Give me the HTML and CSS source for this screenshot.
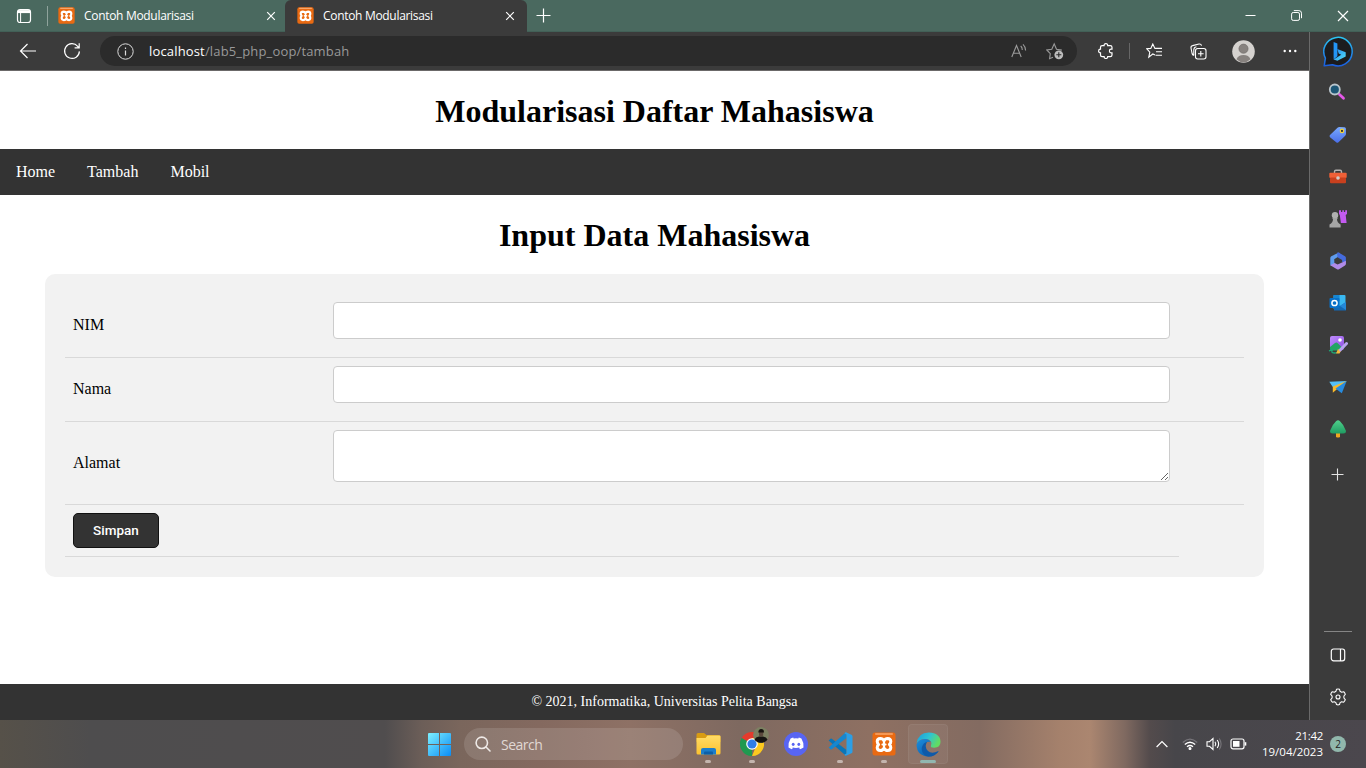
FILE: index.html
```html
<!DOCTYPE html>
<html lang="id">
<head>
<meta charset="utf-8">
<title>Contoh Modularisasi</title>
<link rel="stylesheet" href="styles.css">
</head>
<body>
<svg class="defs" width="0" height="0" aria-hidden="true">
  <defs>
    <linearGradient id="win" x1="0" y1="0" x2="1" y2="1"><stop offset="0" stop-color="#7df0ff"/><stop offset="1" stop-color="#0a8cf5"/></linearGradient>
    <linearGradient id="bing" x1="0" y1="0" x2="0" y2="1"><stop offset="0" stop-color="#2bc3f2"/><stop offset="1" stop-color="#1a5fe0"/></linearGradient>
    <linearGradient id="bingb" x1="0" y1="0" x2="1" y2="1"><stop offset="0" stop-color="#2186f0"/><stop offset="1" stop-color="#54e0f5"/></linearGradient>
    <linearGradient id="tag" x1="0" y1="0" x2="0" y2="1"><stop offset="0" stop-color="#79a9ff"/><stop offset="1" stop-color="#4a6fe8"/></linearGradient>
    <linearGradient id="folder" x1="0" y1="0" x2="0" y2="1"><stop offset="0" stop-color="#ffdc68"/><stop offset="1" stop-color="#fcc22f"/></linearGradient>
    <linearGradient id="edge1" x1="0" y1="0" x2="1" y2=".4"><stop offset="0" stop-color="#1c9bdc"/><stop offset=".55" stop-color="#2fc3d2"/><stop offset="1" stop-color="#62dc63"/></linearGradient>
    <linearGradient id="edge2" x1="0" y1="0" x2="1" y2="1"><stop offset="0" stop-color="#1a8fe0"/><stop offset="1" stop-color="#0c4f9c"/></linearGradient>
    <linearGradient id="pal" x1="0" y1="0" x2="1" y2="1"><stop offset="0" stop-color="#c08cff"/><stop offset="1" stop-color="#8c4fe0"/></linearGradient>
    <linearGradient id="tree" x1="0" y1="0" x2="0" y2="1"><stop offset="0" stop-color="#4fd08b"/><stop offset="1" stop-color="#1f9c62"/></linearGradient>
    <symbol id="xampp" viewBox="0 0 24 24">
      <rect x=".5" y=".5" width="23" height="23" rx="2.5" fill="#e96a12"/>
      <rect x="3" y="1.2" width="18" height="1.6" rx=".8" fill="#f7a76b"/>
      <path d="M12 8.800Q10.800 6.500 8.400 6.500 5.200 6.600 5.200 9.400 5.300 11.300 6.600 12.500 5.200 13.700 5.200 15.600 5.300 18.400 8.400 18.500 10.800 18.500 12 16.200 13.200 18.500 15.600 18.500 18.700 18.400 18.800 15.600 18.800 13.700 17.400 12.500 18.800 11.300 18.800 9.400 18.700 6.600 15.600 6.500 13.200 6.500 12 8.800z" fill="none" stroke="#fff" stroke-width="3" stroke-linejoin="round"/>
      <path d="M10.500 12.500h3M12 9v7" stroke="#fff" stroke-width="2.200" stroke-linecap="round"/>
    </symbol>
    <symbol id="close" viewBox="0 0 10 10"><path d="M1.2 1.2l7.600 7.600M8.800 1.200L1.200 8.800" fill="none" stroke="#fff" stroke-width="1.200"/></symbol>
  </defs>
</svg>

<div class="tabstrip">
  <svg class="tabs-menu" width="16" height="16" viewBox="0 0 16 16" fill="none" stroke="#fff" stroke-width="1.200"><rect x="1.500" y="1.500" width="13" height="13" rx="2.500"/><path d="M2 3.600h12" stroke-width="3"/><path d="M4.600 5v9" stroke-width="1"/></svg>
  <span class="tab-sep"></span>
  <div class="tab tab-first">
    <svg class="favicon" width="17" height="17"><use href="#xampp"/></svg>
    <span class="tab-title">Contoh Modularisasi</span>
    <svg class="tab-close" width="10" height="10"><use href="#close"/></svg>
  </div>
  <div class="tab tab-active">
    <svg class="favicon" width="17" height="17"><use href="#xampp"/></svg>
    <span class="tab-title">Contoh Modularisasi</span>
    <svg class="tab-close" width="10" height="10"><use href="#close"/></svg>
  </div>
  <svg class="new-tab" width="15" height="15" viewBox="0 0 15 15"><path d="M7.500.5v14M.5 7.500h14" stroke="#fff" stroke-width="1.200"/></svg>
  <div class="window-controls">
    <svg width="11" height="11" viewBox="0 0 11 11"><path d="M.5 5.500h10" stroke="#fff"/></svg>
    <svg width="11" height="11" viewBox="0 0 11 11" fill="none" stroke="#fff"><rect x=".6" y="2.500" width="7.900" height="7.900" rx="1.600"/><path d="M2.800.6h5.100q2.600 0 2.600 2.600v5"/></svg>
    <svg width="12" height="12" viewBox="0 0 12 12"><path d="M1 1l10 10M11 1L1 11" stroke="#fff" stroke-width="1.200"/></svg>
  </div>
</div>

<div class="browser">
  <div class="main">
    <div class="toolbar">
      <svg class="back" width="18" height="16" viewBox="0 0 18 16" fill="none" stroke="#fff" stroke-width="1.200"><path d="M17 8H1.500M8.500 1l-7 7 7 7"/></svg>
      <svg class="reload" width="18" height="18" viewBox="0 0 18 18" fill="none" stroke="#fff" stroke-width="1.200"><path d="M16.400 9.400a7.400 7.400 0 1 1-1.700-5.100l1.200 1.500M16.200 1.300v4.600h-4.600"/></svg>
      <div class="address">
        <svg width="17" height="17" viewBox="0 0 17 17" fill="none" stroke="#ddd"><circle cx="8.500" cy="8.500" r="7.700"/><path d="M8.500 7.400v5M8.500 4.600v1.400" stroke-width="1.200"/></svg>
        <span class="url"><b>localhost</b>/lab5_php_oop/tambah</span>
        <svg class="read" width="16" height="16" viewBox="0 0 16 16" fill="none" stroke="#9b9b9b" stroke-width="1.100"><path d="M.8 14L5.500 2.500 10.200 14M2.400 10.300h6.200M9.700 3q1.600 1.300 1.600 4M12 1.400q2.600 2.400 2.600 6"/></svg>
        <svg class="fav" width="18" height="18" viewBox="0 0 18 18" fill="none" stroke="#9b9b9b" stroke-width="1.100"><path d="M7 15.200l-3.400 1.500.7-5L.8 8l5-.8L8.200 1.800l2.300 5.400 5.300.9"/><circle cx="12.800" cy="12.800" r="4.400" fill="#bdbdbd" stroke="none"/><path d="M12.800 10.300v5M10.300 12.800h5" stroke="#2b2b2b"/></svg>
      </div>
      <svg class="ext" width="16" height="16" viewBox="0 0 16 16" fill="none" stroke="#fff" stroke-width="1.200"><path d="M2.500 4.300q0-1.600 1.600-1.600h2q-.1-2 1.800-2t1.800 2h2.500q1.800 0 1.800 1.600v1.900h-.9q-1.700 0-1.700 1.800t1.700 1.800h.9v2.300q0 1.600-1.800 1.600H9.700q0 1.800-1.800 1.800t-1.800-1.800h-2q-1.600 0-1.600-1.600V9.800Q.6 9.800.6 8t1.900-1.800z"/></svg>
      <span class="tool-sep"></span>
      <svg class="favs" width="17" height="16" viewBox="0 0 17 16" fill="none" stroke="#fff" stroke-width="1.100"><path d="M9 12l-2.200-1-4 3.200 1-5L.8 5.800l4-.4L6.800 1l2.100 4.400H16M10 8.800h6M9.500 12.200H16"/></svg>
      <svg class="coll" width="17" height="17" viewBox="0 0 17 17" fill="none" stroke="#fff" stroke-width="1.100"><rect x="5.500" y="5.500" width="10.500" height="10.500" rx="2.200"/><path d="M10.800 8v5.600M8 10.800h5.600M3.800 12.500Q2.500 12 2.100 10.500L1 5q-.3-2 1.600-2.400L9 1q2-.3 2.600 1.700M3.800 12.500V6.700q.2-2.600 2.600-3"/></svg>
      <svg class="avatar" width="23" height="23" viewBox="0 0 23 23"><circle cx="11.500" cy="11.500" r="11.300" fill="#d5d2cf"/><circle cx="11.500" cy="8.700" r="4.600" fill="#87827f" stroke="#6d6866" stroke-width=".6"/><path d="M4.500 19.300q1.600-4.300 7-4.300t7 4.300q-3 3-7 3t-7-3z" fill="#87827f"/></svg>
      <svg class="more" width="14" height="4" viewBox="0 0 14 4" fill="#fff"><circle cx="1.700" cy="2" r="1.200"/><circle cx="7" cy="2" r="1.200"/><circle cx="12.300" cy="2" r="1.200"/></svg>
    </div>

    <div class="page">
      <h1>Modularisasi Daftar Mahasiswa</h1>
      <nav><a>Home</a><a>Tambah</a><a>Mobil</a></nav>
      <h2>Input Data Mahasiswa</h2>
      <form class="form">
        <div class="row"><label for="nim">NIM</label><input id="nim" type="text"></div>
        <div class="row"><label for="nama">Nama</label><input id="nama" type="text"></div>
        <div class="row row-tall"><label for="alamat">Alamat</label><textarea id="alamat"></textarea></div>
        <div class="row row-submit"><button type="button">Simpan</button></div>
      </form>
      <footer>© 2021, Informatika, Universitas Pelita Bangsa</footer>
    </div>
  </div>

  <aside class="sidebar">
    <div class="slot slot-bing"><svg width="31" height="31" viewBox="0 0 31 31"><path d="M1.200 29.800l1.200-7.600A14.200 14.200 0 1 1 9.500 28.700z" fill="#1c1c1e" stroke="url(#bing)" stroke-width="1.500" stroke-linejoin="round"/><path d="M10.600 6l3.800 1.500v12.800l-3.800 3.200z" fill="#2395f5"/><path d="M10.600 23.500l5.200-3.300 2.400-1.400-2.500-1.300-1.400-4.400 8.400 3.200v4.100l-8.300 4.400z" fill="url(#bingb)"/></svg></div>
    <div class="slot slot-left"><svg width="18" height="18" viewBox="0 0 18 18"><path d="M11.500 11.500l4 3.800" stroke="#e458e8" stroke-width="2.800" stroke-linecap="round"/><circle cx="6.800" cy="6.500" r="5" fill="#1c5675" stroke="#b9c4cb" stroke-width="1.800"/></svg></div>
    <div class="slot slot-low"><svg width="18" height="18" viewBox="0 0 18 18"><path d="M1 9L8.500 1.800q.8-.8 2-.8l5 .2q1.400.2 1.400 1.500L17 7.700q0 1.200-.8 2L9.500 16.200q-1.200 1-2.300 0L1 11.200q-1-1.200 0-2.200z" fill="url(#tag)"/><circle cx="13" cy="4.900" r="1.700" fill="#303030" stroke="#f4d53c" stroke-width="1.200"/></svg></div>
    <div class="slot slot-low"><svg width="18" height="18" viewBox="0 0 18 18"><path d="M5.500 5V3.700q0-1.400 1.400-1.400h4.200q1.400 0 1.400 1.400V5" fill="none" stroke="#b5b2b0" stroke-width="1.400"/><rect x=".3" y="4.800" width="17.400" height="5.200" rx="1" fill="#ef6037"/><rect x="1" y="9.500" width="16" height="5.800" rx="1" fill="#c8401e"/><circle cx="9" cy="10" r="1.800" fill="#d1cdca"/></svg></div>
    <div class="slot"><svg width="18" height="18" viewBox="0 0 18 18"><path d="M10 .2h2V2h1.300V.2h1.600V2h1.300V.2H18V4l-1.300 1 .9 8h-5.700L10.800 5 10 4z" fill="#c35af0"/><circle cx="6" cy="5.300" r="3.200" fill="#b0b0b0"/><path d="M3 8h6l-1 1q0 3.500 3.600 5.500V17.500H.5v-3Q4 12.500 4 9z" fill="#a5a5a5"/></svg></div>
    <div class="slot"><svg width="18" height="18" viewBox="0 0 18 18"><path d="M10 .6L2.300 4.200q-1 .6-1 1.800v7.300l4.300 1.300-.4-7.400L11.800 3z" fill="#5f9cec"/><path d="M8 .8q1-.6 2 0l6 3.400q.9.600.9 1.600v6.500l-3.800-2.600V8L8.500 5.200z" fill="#456bdd"/><path d="M1.300 13.300L5.600 11l3 1.500 8.300-3.700v3q0 1-.9 1.600l-6 3.800q-1 .6-2 0z" fill="#b08be8"/></svg></div>
    <div class="slot"><svg width="18" height="18" viewBox="0 0 18 18"><rect x="4.500" y="1" width="12" height="14" rx="1" fill="#39b8f1"/><path d="M4.500 1h6v6h-6z" fill="#1685d2"/><path d="M5 16.500V9l6 3 6-4v8.500z" fill="#1269b5"/><path d="M11 12l6 4V8z" fill="#2488d8"/><rect x=".5" y="4" width="10" height="10" rx="1" fill="#0870c8"/><circle cx="5.500" cy="9" r="2.600" fill="none" stroke="#fff" stroke-width="1.500"/></svg></div>
    <div class="slot"><svg width="20" height="20" viewBox="0 0 20 20"><rect x="2" y="1" width="14" height="14" rx="2" fill="url(#pal)"/><circle cx="12" cy="5" r="1.800" fill="#fff"/><path d="M2 12l5-4q1.500-1 3 .5l4 4-3 3H4q-2 0-2-2z" fill="#23a565"/><path d="M1 16q4-2 3 0t3 2l3-1" fill="none" stroke="#20a777" stroke-width="1.300"/><path d="M10 14l3 2-1.500 2.500H8z" fill="#f5b938"/><path d="M12.500 14.800l6-6.300" stroke="#b7a4ee" stroke-width="3" stroke-linecap="round"/></svg></div>
    <div class="slot"><svg width="18" height="18" viewBox="0 0 18 18"><path d="M.3 3.800L17.700 3 9 8.500 3.800 9z" fill="#54c0f7"/><path d="M17.700 3L3.800 8.500v6.300l4.700-4z" fill="#f8b92b"/><path d="M17.700 3l-4.900 12.200L6.500 10.500z" fill="#278ce0"/></svg></div>
    <div class="slot slot-tree"><svg width="18" height="18" viewBox="0 0 18 18"><path d="M7 12h4v5q-2 1-4 0z" fill="#f0a720"/><path d="M7 1.300Q9-.6 11 1.300q4 3.700 5.800 9.200.8 3-2.300 3h-11q-3.100 0-2.300-3Q3 5 7 1.300z" fill="url(#tree)"/></svg></div>
    <div class="slot slot-plus"><svg width="13" height="13" viewBox="0 0 13 13"><path d="M6.500.5v12M.5 6.500h12" stroke="#e3e3e3" stroke-width="1.100"/></svg></div>
    <span class="side-line"></span>
    <div class="slot"><svg width="16" height="14" viewBox="0 0 16 14" fill="none" stroke="#fff" stroke-width="1.200"><rect x="1.300" y="1" width="13.400" height="11.800" rx="2.300"/><path d="M10.500 1v12"/></svg></div>
    <div class="slot slot-gear"><svg width="18" height="18" viewBox="0 0 18 18" fill="none" stroke="#fff" stroke-width="1.100"><path d="M7.500 1.300q1.500-.6 3 0l.6 2 1.500.9 2.100-.5q1.100 1 1.600 2.600L14.900 8v2l1.400 1.600q-.5 1.600-1.600 2.600l-2.100-.5-1.500.9-.6 2q-1.500.6-3 0l-.6-2-1.500-.9-2.100.5q-1.100-1-1.600-2.600L3.100 10V8L1.700 6.300q.5-1.600 1.600-2.600l2.100.5 1.500-.9z" stroke-linejoin="round"/><circle cx="9" cy="9" r="2"/></svg></div>
  </aside>
</div>

<div class="taskbar">
  <svg class="start" width="23" height="23" viewBox="0 0 23 23"><path d="M0 1q0-1 1-1h10v11H0zM12 0h10q1 0 1 1v10H12zM0 12h11v11H1q-1 0-1-1zM12 12h11v10q0 1-1 1H12z" fill="url(#win)"/></svg>
  <div class="search">
    <svg width="16" height="16" viewBox="0 0 16 16" fill="none" stroke="#eee9e6" stroke-width="1.600"><circle cx="6.800" cy="6.800" r="5.700"/><path d="M11 11l4 4" stroke-linecap="round"/></svg>
    <span>Search</span>
  </div>
  <div class="apps">
    <div class="app running"><svg width="25" height="24" viewBox="0 0 25 24"><path d="M.5 6V2.500Q.5 1 2 1h6l2.500 2h12q2 0 2 2v5H.5z" fill="#d89b13"/><path d="M.5 6h9l2-2.500h12q1 0 1 1V21q0 1.500-1.500 1.500H2Q.5 22.500.5 21z" fill="url(#folder)"/><path d="M5 22.500V18q0-2 2-2h11q2 0 2 2v4.500z" fill="#1c7ecb"/><path d="M8 22.500v-2q0-1 1-1h7q1 0 1 1v2z" fill="#0d5fa8"/></svg></div>
    <div class="app running"><svg width="24" height="24" viewBox="0 0 24 24"><path d="M12 12L1.600 6A12 12 0 0 1 22.400 6z" fill="#e33b2e"/><path d="M12 12L1.600 6A12 12 0 0 0 12 24z" fill="#209950"/><path d="M12 12h5l-5 12A12 12 0 0 0 22.400 6H12z" fill="#fcc91f"/><circle cx="12" cy="12" r="5.800" fill="#fff"/><circle cx="12" cy="12" r="4.600" fill="#2f7de8"/></svg>
      <svg class="profile" width="16" height="16" viewBox="0 0 16 16"><circle cx="8" cy="8" r="7.900" fill="#7c8062"/><path d="M1.500 12.500q1-2.500 4.500-3h4q3.500.5 4.500 3a8 8 0 0 1-13 0z" fill="#151412"/><path d="M6 4.500h4.200v4q-2.100 2-4.200 0z" fill="#5a493d"/><path d="M5.300 5.500q0-3.500 2.900-3.500t2.900 3.500z" fill="#15120f"/></svg></div>
    <div class="app"><svg width="24" height="24" viewBox="0 0 24 24"><circle cx="12" cy="12" r="12" fill="#5865f2"/><path d="M9.700 6.500q2.300-.4 4.600 0l.5-.9q1.400.3 2.600.9 2.500 3.900 2.100 9-1.800 1.300-3.500 1.700l-.9-1.400.9-.5q-4 1.500-8 0l.9.500-.9 1.400q-1.700-.4-3.500-1.700-.4-5.100 2.100-9 1.200-.6 2.600-.9z" fill="#fff"/><ellipse cx="9.200" cy="12.300" rx="1.400" ry="1.600" fill="#5865f2"/><ellipse cx="14.800" cy="12.300" rx="1.400" ry="1.600" fill="#5865f2"/></svg></div>
    <div class="app running"><svg width="25" height="24" viewBox="0 0 25 24"><path d="M.6 8.500L2.500 6.800q.7-.5 1.300 0L18.500 18v5.500q-1 0-2-1z" fill="#0876b9"/><path d="M.6 15.500l1.900 1.700q.7.500 1.300 0L18.500 6V.5q-1 0-2 1z" fill="#1687cf"/><path d="M18 .2l5.500 2.500q1 .5 1 1.500v15.600q0 1-1 1.500L18 23.800q-1 .2-1.500-1.300l2-1V2.500l-2-1Q17 0 18 .2z" fill="#2b9fe6"/></svg></div>
    <div class="app running"><svg width="24" height="24"><use href="#xampp"/></svg></div>
    <div class="app current"><svg width="25" height="25" viewBox="0 0 25 25"><path d="M.6 11.500Q2 .5 12.800.5 24.500 1 24.500 10q0 5.500-6.300 5.700-4.200 0-3.200-2.200 1.300-2-.2-4.200Q13 6.900 9 6.900q-6 .1-8.400 4.600z" fill="url(#edge1)"/><path d="M.5 12.500Q2.500 7 9 6.900q4.500.3 5.700 2.900-6.200-.8-5.800 5.200.6 6.200 7.100 6.500 3.500 0 7-2.500Q19 24.600 12.500 24.500.8 24 .5 12.500z" fill="url(#edge2)"/><path d="M11 10q-3 5 1 9 3.500 3.500 10.500 0Q18 25.500 11 24.300 4.500 21 6 15q1.500-4.500 5-5z" fill="#0f5aa9"/></svg></div>
  </div>
  <div class="tray">
    <svg class="chev" width="12" height="8" viewBox="0 0 12 8" fill="none" stroke="#fff" stroke-width="1.200"><path d="M.6 7L6 1.500 11.400 7"/></svg>
    <svg class="wifi" width="16" height="12" viewBox="0 0 16 12" fill="none" stroke="#fff" stroke-width="1.300"><path d="M.8 4.500q7.200-6.800 14.400 0" stroke="#77757a"/><path d="M2.800 6.600q5.200-4.800 10.400 0M5 8.800q3-2.600 6 0"/><circle cx="8" cy="10.500" r=".9" fill="#fff"/></svg>
    <svg class="vol" width="16" height="14" viewBox="0 0 16 14" fill="none" stroke="#fff" stroke-width="1.100"><path d="M1 4.700h2.500L7 1.500v11L3.500 9.300H1zM9 4.800q1.600 2.200 0 4.400M11.200 3q2.900 4 0 8"/><path d="M13.300 1.500q3.600 5.500 0 11" stroke="#77757a"/></svg>
    <svg class="bat" width="17" height="12" viewBox="0 0 17 12" fill="none" stroke="#fff" stroke-width="1.200"><rect x="1" y="1" width="13" height="9.800" rx="2"/><rect x="3" y="3" width="6.500" height="5.800" fill="#fff" stroke="none"/><path d="M15.500 4.200v3.400" stroke-width="1.600"/></svg>
    <div class="clock"><span class="time">21:42</span><span class="date">19/04/2023</span></div>
    <span class="count">2</span>
  </div>
</div>
</body>
</html>
```

FILE: styles.css
```css
* { box-sizing: border-box; }
body {
  margin: 0;
  width: 1366px;
  height: 768px;
  overflow: hidden;
  display: flex;
  flex-direction: column;
  background: #fff;
  font-family: "Open Sans", "Noto Sans", sans-serif;
}
svg { display: block; flex: none; }
.defs { position: absolute; }

/* Tab strip */
.tabstrip {
  flex: none;
  height: 32px;
  display: flex;
  align-items: center;
  background: #4a695f;
  border-bottom: 1px solid #426057;
}
.tabs-menu { margin-left: 16px; }
.tab-sep { width: 1px; height: 20px; margin-left: 15px; background: #8fa39c; }
.tab { height: 32px; display: flex; align-items: center; font-size: 12px; color: #fff; }
.tab-first { width: 237px; padding-left: 10px; }
.tab-active { width: 242px; padding-left: 12px; background: #3b3b3b; border-radius: 6px 6px 0 0; }
.tab-title { margin-left: 9px; width: 182px; white-space: nowrap; letter-spacing: -0.31px; }
.new-tab { margin-left: 9px; }
.window-controls { margin-left: auto; display: flex; align-items: center; gap: 35px; padding-right: 17px; }

/* Browser body */
.browser { flex: none; height: 688px; display: flex; }
.main { width: 1309px; display: flex; flex-direction: column; }
.toolbar {
  flex: none;
  height: 39px;
  display: flex;
  align-items: center;
  background: #3b3b3b;
  border-bottom: 1px solid #6b6969;
}
.back { margin-left: 19px; }
.reload { margin-left: 26px; }
.address {
  width: 977px;
  height: 30px;
  margin-left: 19px;
  padding: 0 13px 0 17px;
  display: flex;
  align-items: center;
  background: #2b2b2b;
  border-radius: 15px;
}
.url { margin-left: 15px; font-size: 13px; letter-spacing: 0.16px; color: #999; white-space: nowrap; }
.url b { font-weight: 400; color: #fff; }
.read { margin-left: auto; }
.fav { margin-left: 19px; }
.ext { margin-left: 21px; }
.tool-sep { width: 1px; height: 16px; margin-left: 15px; background: #666; }
.favs { margin-left: 16px; }
.coll { margin-left: 27px; }
.avatar { margin-left: 25px; }
.more { margin-left: 28px; }

/* Page */
.page {
  flex: 1;
  display: flex;
  flex-direction: column;
  background: #fff;
  color: #000;
  font-family: "Liberation Serif", serif;
  font-size: 16px;
}
h1, h2 { margin: 0; text-align: center; font-size: 32px; font-weight: 700; white-space: nowrap; }
h1 { height: 78px; line-height: 80px; }
h2 { height: 79px; line-height: 81px; }
nav { height: 46px; display: flex; gap: 32px; padding: 0 16px; line-height: 46px; background: #333; color: #fff; }
.form { margin: 0 45px; height: 303px; padding: 20px; border-radius: 10px; background: #f2f2f2; }
.row { height: 64px; padding: 8px; display: grid; grid-template-columns: 260px 837px; border-bottom: 1px solid #d9d9d9; }
.row label { align-self: center; padding-bottom: 2px; line-height: 18px; }
.row-tall { height: 83px; }
.row-tall label { padding-bottom: 0; }
.row-submit { width: 1114px; height: 52px; }
.row input, .row textarea { width: 837px; height: 37px; margin: 0; padding: 8px; background: #fff; border: 1px solid #ccc; border-radius: 4px; }
.row textarea { height: 52px; }
.row button {
  width: 86px;
  height: 35px;
  padding: 0 0 1px;
  background: #333;
  border: 1px solid #111;
  border-radius: 5px;
  color: #fff;
  font: 500 13.5px Roboto, sans-serif;
}
footer { height: 36px; margin-top: auto; padding-left: 20px; background: #333; color: #fff; font-size: 14px; line-height: 35px; text-align: center; }

/* Edge sidebar */
.sidebar {
  width: 57px;
  display: flex;
  flex-direction: column;
  align-items: center;
  background: #3b3b3b;
  border-left: 1px solid #6a6a6a;
}
.slot { flex: none; height: 42.2px; display: flex; align-items: center; justify-content: center; }
.slot-bing { height: 39px; }
.slot-left { padding-right: 2px; }
.slot-low { padding-top: 2px; }
.slot-tree { padding-bottom: 2px; }
.slot-plus { height: 48px; padding-right: 1px; }
.slot-gear { height: 44px; padding-bottom: 3px; }
.side-line { width: 28px; height: 1px; margin-top: auto; margin-bottom: 2px; background: #858585; }

/* Taskbar */
.taskbar {
  flex: none;
  height: 48px;
  padding-left: 428px;
  display: flex;
  align-items: center;
  background: linear-gradient(90deg, #565149 0, #4e4d4e 90px, #504d4e 385px, #6c5e58 422px, #7a665c 460px, #84695f 540px, #8e7165 630px, #7e6960 740px, #8e7062 870px, #836b61 980px, #a5816c 1060px, #ab8670 1090px, #7f6960 1125px, #534b4c 1150px, #47464a 1175px, #4b474d 1366px);
}
.search {
  width: 219px;
  height: 32px;
  margin-left: 13px;
  padding-left: 11px;
  display: flex;
  align-items: center;
  gap: 10px;
  border-radius: 16px;
  background: rgba(255, 255, 255, 0.12);
  color: #e0d8d4;
  font-size: 14px;
  letter-spacing: -0.5px;
}
.apps { display: flex; gap: 4px; margin-left: 5px; }
.app { position: relative; width: 40px; height: 40px; display: flex; align-items: center; justify-content: center; }
.running::after, .current::after {
  content: "";
  position: absolute;
  left: 17px;
  bottom: 1px;
  width: 6px;
  height: 3px;
  border-radius: 2px;
  background: #c4b5ae;
}
.current { background: rgba(255, 255, 255, 0.05); border-radius: 4px; box-shadow: inset 0 0 0 1px rgba(255, 255, 255, 0.05); }
.current::after { left: 12px; width: 16px; background: #91b7b0; }
.profile { position: absolute; top: 3px; left: 21px; }
.tray { margin-left: auto; padding-right: 20px; display: flex; align-items: center; color: #fff; }
.wifi { margin-left: 14px; }
.vol { margin-left: 8px; }
.bat { margin-left: 8px; }
.clock { width: 76px; display: flex; flex-direction: column; align-items: flex-end; font-size: 11.5px; line-height: 16px; letter-spacing: 0; }
.time { letter-spacing: -0.3px; }
.count { width: 16px; height: 16px; margin-left: 7px; border-radius: 50%; background: #91b7ac; color: #222; font-size: 10px; line-height: 16px; text-align: center; }
```
